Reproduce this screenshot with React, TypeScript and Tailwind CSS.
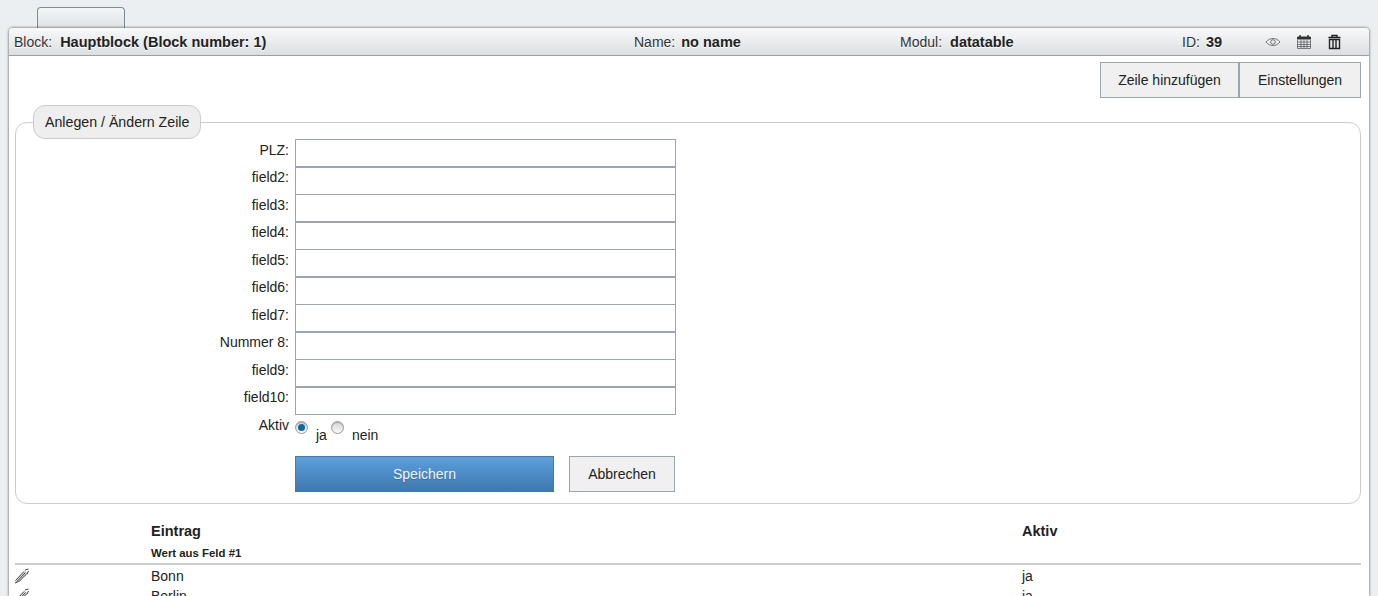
const fields = ["PLZ:", "field2:", "field3:", "field4:", "field5:", "field6:", "field7:", "Nummer 8:", "field9:", "field10:"];

function PencilIcon() {
  return (
    <svg width="16" height="16" viewBox="0 0 16 16" className="-ml-px shrink-0 text-[#444]">
      <path d="M1 15l1.500-4 8-8.500 3.500 3-8.500 8z" fill="#ddd" />
      <path d="M1 15l3.500-1.500 M1.500 12.500L10 3.500 M3 13.500L11.500 4.500 M4.500 14L13 5.500 M11 2l3.500-1 M13 6l1.500-3" fill="none" stroke="currentColor" strokeWidth="1" />
    </svg>
  );
}

function EyeIcon() {
  return (
    <svg width="16" height="16" viewBox="0 0 16 16" className="text-[#777]">
      <path d="M1 8c2-2.500 4.500-3.500 7-3.500s5 1 7 3.500c-2 2.500-4.500 3.500-7 3.500s-5-1-7-3.500z" fill="none" stroke="currentColor" />
      <circle cx="8" cy="8" r="2.300" fill="none" stroke="currentColor" />
    </svg>
  );
}

function CalendarIcon() {
  return (
    <svg width="16" height="16" viewBox="0 0 16 16" className="text-[#333]">
      <path d="M1.500 3h13v2h-13z" fill="currentColor" stroke="currentColor" />
      <path d="M1.500 5.500v9h13v-9 M1.500 8h13 M1.500 10.500h13 M1.500 12.500h13 M5 6v8 M8 6v8 M11 6v8" fill="none" stroke="currentColor" strokeOpacity="0.6" />
      <path d="M4 1v2 M12 1v2" stroke="currentColor" strokeWidth="1.500" />
    </svg>
  );
}

function TrashIcon() {
  return (
    <svg width="16" height="16" viewBox="0 0 16 16" className="text-[#222]">
      <path d="M1.500 3.500h12 M5 3V1.500h5V3" fill="none" stroke="currentColor" strokeWidth="1.400" />
      <path d="M2.500 5.500h10v9h-10z M6 6v8 M9 6v8" fill="none" stroke="currentColor" strokeWidth="1.400" />
    </svg>
  );
}

function Radio({ checked }: { checked?: boolean }) {
  return (
    <span className="mt-[7px] flex h-[13px] w-[13px] shrink-0 items-center justify-center rounded-full border border-[#9a9a9a] bg-gradient-to-b from-[#d6d6d6] to-[#f8f8f8] shadow-[inset_0_1px_1px_rgba(0,0,0,0.2)]">
      {checked && <span className="h-[7px] w-[7px] rounded-full bg-[#0b6aa6]" />}
    </span>
  );
}

export default function App() {
  return (
    <div className="h-[596px] overflow-hidden bg-[#eceff2] font-['Liberation_Sans',Arial,sans-serif] text-sm text-[#222]">
      <div className="pt-[7px]">
        <div className="ml-[37px] h-[21px] w-[88px] rounded-t-[4px] border border-b-0 border-[#7d8c94] bg-gradient-to-b from-[#f3f5f6] to-[#dfe3e6]" />
      </div>
      <div className="ml-[9px] mr-[9px] h-[568px] rounded-t-[4px] bg-white shadow-[0_0_3px_rgba(0,0,0,0.7)]">
        <div className="flex h-7 items-center rounded-t-[4px] border-b border-[#9a9fa4] bg-gradient-to-b from-[#f8f9f9] to-[#dcdfe2] text-sm [text-shadow:0_1px_0_#fff]">
          <div className="flex w-[625px] gap-2 pl-[5px] pt-px">
            <span className="text-[#333]">Block:</span>
            <b className="text-[14.5px]">Hauptblock (Block number: 1)</b>
          </div>
          <div className="flex w-[266px] gap-1.5 pt-px">
            <span className="text-[#333]">Name:</span>
            <b className="text-[14.5px]">no name</b>
          </div>
          <div className="flex w-[282px] gap-2 pt-px">
            <span className="text-[#333]">Modul:</span>
            <b className="text-[14.5px]">datatable</b>
          </div>
          <div className="flex w-[83px] gap-1.5 pt-px">
            <span className="text-[#333]">ID:</span>
            <b className="text-[14.5px]">39</b>
          </div>
          <div className="flex gap-[15px]">
            <EyeIcon />
            <CalendarIcon />
            <TrashIcon />
          </div>
        </div>

        <div className="flex justify-end pr-2 pt-1.5">
          <button className="h-9 w-[139px] border border-[#9aa5b1] bg-[#f0f0f0]">Zeile hinzufügen</button>
          <button className="h-9 w-[122px] border border-[#9aa5b1] bg-[#f0f0f0]">Einstellungen</button>
        </div>

        <fieldset className="ml-1.5 mr-2 mt-[7px] h-[399px] rounded-xl border border-[#ccc]">
          <legend className="ml-[17px] h-[34px] rounded-xl border border-[#ccc] bg-[#eee] px-[11px] text-[14.2px] leading-[32px]">
            Anlegen / Ändern Zeile
          </legend>
          <div className="pl-[273px]">
            {fields.map((f) => (
              <div key={f} className="flex h-[27.500px]">
                <label className="-ml-[200px] -mt-[0.25px] w-[206px] pr-1.5 text-right leading-[22px]">{f}</label>
                <input className="h-[28px] w-[381px] border border-[#9aa5b1] bg-white" />
              </div>
            ))}
            <div className="flex h-[42px]">
              <label className="-ml-[200px] w-[206px] pr-1.5 pt-[3px] text-right leading-4">Aktiv</label>
              <Radio checked />
              <span className="ml-2 mr-1 mt-[13px] leading-4">ja</span>
              <Radio />
              <span className="ml-2 mt-[13px] leading-4">nein</span>
            </div>
            <div className="ml-1.5 flex gap-[15px]">
              <button className="h-9 w-[259px] border border-[#3d7cb5] bg-gradient-to-b from-[#5ba0dc] to-[#3f78b0] text-[#f0f4f8] [text-shadow:0_1px_1px_rgba(0,0,0,0.2)]">Speichern</button>
              <button className="h-9 w-[106px] border border-[#9aa5b1] bg-[#f0f0f0]">Abbrechen</button>
            </div>
          </div>
        </fieldset>

        <div className="ml-1.5 mr-2 mt-4 border-b-2 border-[#ccc]">
          <div className="flex h-[22px] items-center text-[14.5px] font-bold">
            <span className="w-[136px]" />
            <span className="w-[871px]">Eintrag</span>
            <span>Aktiv</span>
          </div>
          <div className="flex h-[21px] items-center pt-0.5 text-[11.400px] font-bold">
            <span className="w-[136px]" />
            <span>Wert aus Feld #1</span>
          </div>
        </div>
        <div className="pt-px">
          {[["Bonn", "ja"], ["Berlin", "ja"]].map(([city, active]) => (
            <div key={city} className="ml-1.5 mr-2 flex h-[20px] items-center">
              <span className="w-[136px]"><PencilIcon /></span>
              <span className="w-[871px]">{city}</span>
              <span>{active}</span>
            </div>
          ))}
        </div>
      </div>
    </div>
  );
}
